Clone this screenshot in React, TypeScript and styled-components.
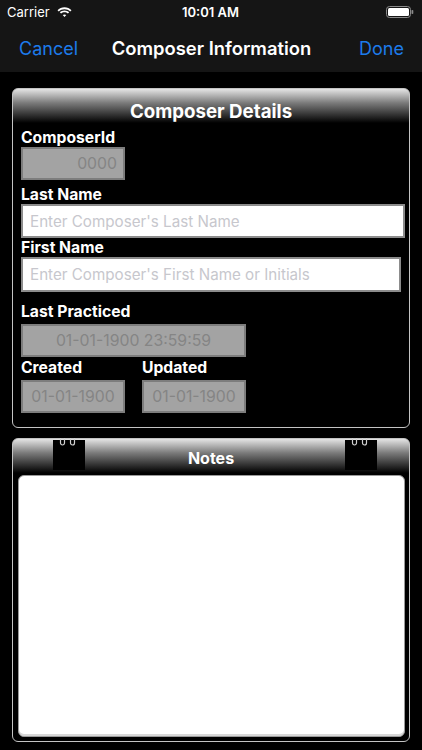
import React from "react";
import styled, { createGlobalStyle } from "styled-components";

const GlobalStyle = createGlobalStyle`
  html, body {
    margin: 0;
    padding: 0;
    background: #000;
    font-family: Inter, "Liberation Sans", Arial, sans-serif;
  }
  * { box-sizing: border-box; }
`;

const Screen = styled.div`
  width: 422px;
  height: 750px;
  background: #000;
  display: flex;
  flex-direction: column;
  overflow: hidden;
`;

const StatusBar = styled.div`
  height: 24px;
  background: #151515;
  color: #fff;
  display: grid;
  grid-template-columns: 1fr auto 1fr;
  align-items: center;
  padding: 0 8px 0 7px;
  font-size: 13px;
`;

const Carrier = styled.div`
  display: flex;
  align-items: center;
  gap: 6px;
`;

const Clock = styled.div`
  font-weight: 600;
  font-size: 13px;
`;

const BatteryWrap = styled.div`
  justify-self: end;
  display: flex;
  align-items: center;
`;

const NavBar = styled.div`
  height: 48px;
  background: #151515;
  display: grid;
  grid-template-columns: 1fr auto 1fr;
  align-items: center;
  padding: 0 18px 0 19px;
`;

const NavButton = styled.span<{ $end?: boolean }>`
  color: #1d7bea;
  font-size: 18px;
  justify-self: ${(p) => (p.$end ? "end" : "start")};
`;

const NavTitle = styled.span`
  color: #fff;
  font-size: 18.4px;
  font-weight: 600;
`;

const Content = styled.div`
  display: flex;
  flex-direction: column;
  gap: 10px;
  padding: 16px 12px 0;
`;

const Panel = styled.div<{ $height: number }>`
  position: relative;
  height: ${(p) => p.$height}px;
  border: 1px solid #c4c4c4;
  border-radius: 6px;
  background: linear-gradient(to bottom, #e4e4e4 0px, #7a7a7a 14px, #000 34px, #000 100%);
  display: flex;
  flex-direction: column;
`;

const PanelTitle = styled.div<{ $size: number; $top: number }>`
  position: relative;
  color: #fff;
  font-weight: 700;
  font-size: ${(p) => p.$size}px;
  line-height: 22px;
  text-align: center;
  padding-top: ${(p) => p.$top}px;
`;

const Body = styled.div`
  padding: 0 8px;
  display: flex;
  flex-direction: column;
`;

const Label = styled.div<{ $mt: number }>`
  color: #fff;
  font-weight: 700;
  font-size: 15.7px;
  line-height: 18px;
  margin-top: ${(p) => p.$mt}px;
`;

const GreyField = styled.div<{ $w: number; $align: string; $mt?: number }>`
  width: ${(p) => p.$w}px;
  height: 33px;
  margin-top: ${(p) => p.$mt ?? 0}px;
  background: #a3a3a3;
  border: 2px solid #7d7d7d;
  color: #858585;
  font-size: 15.8px;
  display: flex;
  align-items: center;
  justify-content: ${(p) => p.$align};
  padding: 0 6px;
  white-space: nowrap;
`;

const TextField = styled.div<{ $w: number; $h: number }>`
  width: ${(p) => p.$w}px;
  height: ${(p) => p.$h}px;
  background: #fff;
  border: 2px solid #8c8c8c;
  color: #c7c7cd;
  font-size: 15.2px;
  display: flex;
  align-items: center;
  padding: 0 7px;
`;

const DateRow = styled.div`
  display: grid;
  grid-template-columns: 104px 104px;
  column-gap: 17px;
`;

const DateCol = styled.div`
  display: flex;
  flex-direction: column;
`;

const Tab = styled.div<{ $left: number }>`
  position: absolute;
  top: 1px;
  left: ${(p) => p.$left}px;
  width: 32px;
  height: 30px;
  background: #000;
`;

const Rings = styled.svg`
  position: absolute;
  top: -2px;
  left: 6px;
`;

const NotesArea = styled.div`
  flex: 1;
  margin: 6px 4px 4px 5px;
  background: #fff;
  border: 1px solid #9a9a9a;
  border-radius: 6px;
  box-shadow: inset 0 -2px 0 #d8d8d8;
`;

const Wifi = () => (
  <svg width="17" height="12" viewBox="0 0 17 12">
    <path d="M8.5 3.2c2.2 0 4.2.9 5.7 2.3l1.3-1.3C13.7 2.4 11.2 1.3 8.5 1.3S3.3 2.4 1.5 4.2l1.3 1.3c1.5-1.4 3.5-2.3 5.7-2.3z" fill="#fff" />
    <path d="M8.5 6.3c1.3 0 2.5.5 3.4 1.3l1.3-1.3C12 5.1 10.3 4.4 8.5 4.4S5 5.1 3.8 6.3l1.3 1.3c.9-.8 2.1-1.3 3.4-1.3z" fill="#fff" />
    <path d="M8.5 8.4c.7 0 1.3.3 1.8.7L8.5 11 6.7 9.1c.5-.4 1.1-.7 1.8-.7z" fill="#fff" />
  </svg>
);

const Battery = () => (
  <svg width="28" height="12" viewBox="0 0 28 12">
    <rect x="0.5" y="0.5" width="24" height="11" rx="3" fill="none" stroke="#8a8a8a" />
    <rect x="2" y="2" width="21" height="8" rx="1.5" fill="#fff" />
    <rect x="25.5" y="4" width="1.8" height="4" rx="0.8" fill="#8a8a8a" />
  </svg>
);

const RingPair = () => (
  <Rings width="20" height="10" viewBox="0 0 20 10">
    <path d="M1.5 0v5a2 2 0 0 0 4 0V0" fill="none" stroke="#d0d0d0" strokeWidth="1.2" />
    <path d="M11.5 0v5a2 2 0 0 0 4 0V0" fill="none" stroke="#d0d0d0" strokeWidth="1.2" />
  </Rings>
);

const App: React.FC = () => {
  return (
    <Screen>
      <GlobalStyle />
      <StatusBar>
        <Carrier>
          Carrier <Wifi />
        </Carrier>
        <Clock>10:01 AM</Clock>
        <BatteryWrap>
          <Battery />
        </BatteryWrap>
      </StatusBar>
      <NavBar>
        <NavButton>Cancel</NavButton>
        <NavTitle>Composer Information</NavTitle>
        <NavButton $end>Done</NavButton>
      </NavBar>
      <Content>
        <Panel $height={340}>
          <PanelTitle $size={18.7} $top={12}>
            Composer Details
          </PanelTitle>
          <Body>
            <Label $mt={6}>ComposerId</Label>
            <GreyField $w={104} $align="flex-end">
              0000
            </GreyField>
            <Label $mt={6}>Last Name</Label>
            <TextField $w={384} $h={34}>
              Enter Composer's Last Name
            </TextField>
            <Label $mt={1}>First Name</Label>
            <TextField $w={380} $h={35}>
              Enter Composer's First Name or Initials
            </TextField>
            <Label $mt={11}>Last Practiced</Label>
            <GreyField $w={225} $align="center" $mt={3}>
              01-01-1900 23:59:59
            </GreyField>
            <DateRow>
              <DateCol>
                <Label $mt={2}>Created</Label>
                <GreyField $w={104} $align="center" $mt={3}>
                  01-01-1900
                </GreyField>
              </DateCol>
              <DateCol>
                <Label $mt={2}>Updated</Label>
                <GreyField $w={104} $align="center" $mt={3}>
                  01-01-1900
                </GreyField>
              </DateCol>
            </DateRow>
          </Body>
        </Panel>
        <Panel $height={304}>
          <Tab $left={40}>
            <RingPair />
          </Tab>
          <Tab $left={332}>
            <RingPair />
          </Tab>
          <PanelTitle $size={16} $top={8}>
            Notes
          </PanelTitle>
          <NotesArea />
        </Panel>
      </Content>
    </Screen>
  );
};

export default App;
